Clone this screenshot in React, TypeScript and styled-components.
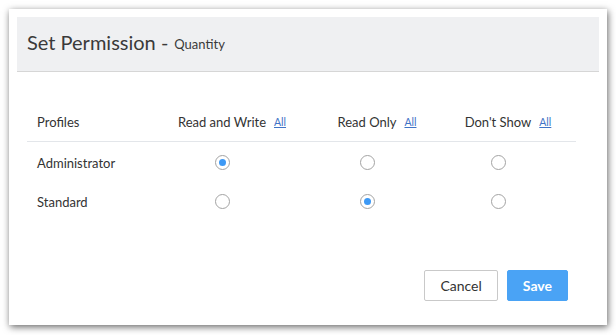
import React, { useState } from "react";
import styled, { createGlobalStyle } from "styled-components";

const Global = createGlobalStyle`
  html, body { margin: 0; padding: 0; background: #ffffff; }
  body { font-family: Lato, "Open Sans", Arial, sans-serif; color: #333; }
  * { box-sizing: border-box; }
`;

const Page = styled.div`
  width: 616px;
  height: 335px;
  padding: 9px 9px 10px 9px;
`;

const Dialog = styled.div`
  width: 598px;
  height: 316px;
  background: #fff;
  padding: 8px;
  box-shadow: 1px 2px 7px rgba(0, 0, 0, 0.6);
  display: flex;
  flex-direction: column;
`;

const Header = styled.div`
  height: 55px;
  background: #eff0f2;
  border-bottom: 1px solid #d6d6d6;
  display: flex;
  align-items: center;
  padding: 0 10px 4px;
`;

const Title = styled.span`
  font-size: 20px;
  font-weight: 400;
  color: #3a3a3a;
`;

const Sub = styled.span`
  font-size: 13px;
  color: #3a3a3a;
  margin-left: 6px;
  padding-top: 4px;
`;

const Grid = styled.div`
  margin: 30px 23px 0 10px;
  display: grid;
  grid-template-columns: 138px 134px 156px 106px 1fr;
`;

const HeadCell = styled.div<{ $center?: boolean }>`
  height: 40px;
  display: flex;
  align-items: center;
  justify-content: ${(p) => (p.$center ? "center" : "flex-start")};
  padding-left: ${(p) => (p.$center ? "0" : "10px")};
  font-size: 13px;
  color: #333;
  border-bottom: 1px solid #e3e6ea;
`;

const AllLink = styled.a`
  font-size: 10.5px;
  color: #3f73c6;
  text-decoration: underline;
  margin-left: 8px;
  margin-top: 1px;
  cursor: pointer;
`;

const Cell = styled.div<{ $center?: boolean }>`
  height: 39px;
  padding-top: 2px;
  display: flex;
  align-items: center;
  justify-content: ${(p) => (p.$center ? "center" : "flex-start")};
  padding-left: ${(p) => (p.$center ? "0" : "10px")};
  padding-right: ${(p) => (p.$center ? "20px" : "0")};
  font-size: 13px;
  color: #333;
`;

const Radio = styled.span<{ $on?: boolean }>`
  width: 15px;
  height: 15px;
  border-radius: 50%;
  border: 1px solid #a3a3a3;
  background: #fff;
  display: flex;
  align-items: center;
  justify-content: center;
  &::after {
    content: "";
    width: 7px;
    height: 7px;
    border-radius: 50%;
    background: ${(p) => (p.$on ? "#3d99f5" : "transparent")};
  }
`;

const Footer = styled.div`
  margin-top: auto;
  display: flex;
  justify-content: flex-end;
  gap: 9px;
  padding: 0 31px 16px 0;
`;

const Button = styled.button<{ $primary?: boolean }>`
  height: 31px;
  padding: 0 15px;
  border-radius: 2px;
  font-family: Lato, "Open Sans", Arial, sans-serif;
  font-size: 14px;
  font-weight: ${(p) => (p.$primary ? 700 : 400)};
  border: 1px solid ${(p) => (p.$primary ? "#4aa3f5" : "#c9c9c9")};
  background: ${(p) => (p.$primary ? "#4aa3f5" : "#fff")};
  color: ${(p) => (p.$primary ? "#fff" : "#333")};
  cursor: pointer;
`;

const profiles = ["Administrator", "Standard"];

export default function App() {
  const [sel, setSel] = useState<number[]>([0, 1]);
  return (
    <Page>
      <Global />
      <Dialog>
        <Header>
          <Title>Set Permission -</Title>
          <Sub>Quantity</Sub>
        </Header>
        <Grid>
          <HeadCell>Profiles</HeadCell>
          <HeadCell $center>
            Read and Write<AllLink>All</AllLink>
          </HeadCell>
          <HeadCell $center>
            Read Only<AllLink>All</AllLink>
          </HeadCell>
          <HeadCell $center>
            Don't Show<AllLink>All</AllLink>
          </HeadCell>
          <HeadCell />
          {profiles.map((name, r) => (
            <React.Fragment key={name}>
              <Cell>{name}</Cell>
              {[0, 1, 2].map((c) => (
                <Cell
                  $center
                  key={c}
                  onClick={() =>
                    setSel((s) => s.map((v, i) => (i === r ? c : v)))
                  }
                >
                  <Radio $on={sel[r] === c} />
                </Cell>
              ))}
              <Cell />
            </React.Fragment>
          ))}
        </Grid>
        <Footer>
          <Button>Cancel</Button>
          <Button $primary>Save</Button>
        </Footer>
      </Dialog>
    </Page>
  );
}
